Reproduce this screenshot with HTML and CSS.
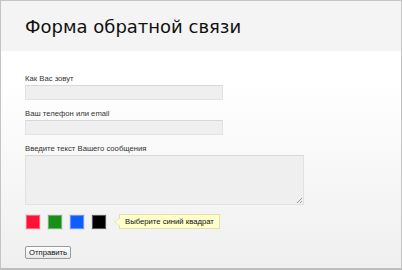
FILE: index.html
```html
<!DOCTYPE html>
<html lang="ru">
<head>
<meta charset="utf-8">
<link rel="stylesheet" href="styles.css">
</head>
<body>
<div class="frame">
  <header class="head">
    <h1 class="title">Форма обратной связи</h1>
  </header>
  <form class="form">
    <div class="field">
      <label class="label">Как Вас зовут</label>
      <div class="input"></div>
    </div>
    <div class="field">
      <label class="label">Ваш телефон или email</label>
      <div class="input"></div>
    </div>
    <div class="field">
      <label class="label">Введите текст Вашего сообщения</label>
      <div class="textarea"><span class="grip"></span></div>
    </div>
    <div class="captcha">
      <span class="sq red"></span>
      <span class="sq green"></span>
      <span class="sq blue"></span>
      <span class="sq black"></span>
      <span class="tip">Выберите синий квадрат</span>
    </div>
    <div class="actions">
      <span class="btn">Отправить</span>
    </div>
  </form>
</div>
</body>
</html>
```
FILE: styles.css
```css
html, body { margin: 0; padding: 0; }
body { width: 402px; height: 270px; overflow: hidden; }
.frame {
  box-sizing: border-box;
  width: 402px;
  height: 270px;
  border: 1px solid #c4c4c4;
  border-bottom: 2px solid #bdbdbd;
  background: linear-gradient(#ffffff 0px, #ffffff 80px, #efefef 100%);
  font-family: "Liberation Sans", Arial, sans-serif;
}
.head {
  height: 50px;
  background: #f4f4f4;
  padding-left: 24px;
  display: flex;
  align-items: center;
}
.title {
  margin: 0;
  font-family: "DejaVu Sans", Verdana, sans-serif;
  font-weight: normal;
  font-size: 18px;
  color: #111;
}
.form {
  padding: 22px 0 0 24px;
}
.field { margin-bottom: 8px; }
.label {
  display: block;
  font-size: 7.7px;
  line-height: 11px;
  color: #333;
  margin-bottom: 1px;
}
.input {
  box-sizing: border-box;
  width: 198px;
  height: 15px;
  background: #efefef;
  border: 1px solid #e2e2e2;
  border-top-color: #d8d8d8;
}
.textarea {
  box-sizing: border-box;
  width: 279px;
  height: 50px;
  background: #efefef;
  border: 1px solid #e2e2e2;
  border-top-color: #d8d8d8;
  position: relative;
}
.grip {
  position: absolute;
  right: 1px;
  bottom: 1px;
  width: 5px;
  height: 5px;
  background: linear-gradient(135deg, transparent 45%, #999 45%, #999 55%, transparent 55%, transparent 75%, #999 75%, #999 85%, transparent 85%);
}
.captcha {
  display: flex;
  align-items: center;
  gap: 8px;
  margin-top: 9px;
  padding-left: 1px;
  height: 15px;
}
.sq {
  box-sizing: border-box;
  width: 14px;
  height: 14px;
  border: 1px solid rgba(255,255,255,0.35);
  outline: 1px solid rgba(0,0,0,0.06);
}
.red { background: #ff1236; }
.green { background: #1a8e1a; }
.blue { background: #0f5cff; }
.black { background: #000; }
.tip {
  position: relative;
  margin-left: 5px;
  height: 15px;
  box-sizing: border-box;
  padding: 0 5px;
  background: #ffffcc;
  border: 1px solid #e6dfa8;
  font-size: 7.7px;
  line-height: 13px;
  color: #111;
}
.tip::before {
  content: "";
  position: absolute;
  left: -6px;
  top: 3px;
  width: 0;
  height: 0;
  border-top: 4px solid transparent;
  border-bottom: 4px solid transparent;
  border-right: 6px solid #e6dfa8;
}
.tip::after {
  content: "";
  position: absolute;
  left: -5px;
  top: 3px;
  width: 0;
  height: 0;
  border-top: 4px solid transparent;
  border-bottom: 4px solid transparent;
  border-right: 6px solid #ffffcc;
}
.actions { margin-top: 12px; }
.btn {
  display: inline-block;
  box-sizing: border-box;
  height: 13px;
  padding: 0 3px;
  font-size: 7.7px;
  line-height: 11px;
  color: #111;
  background: linear-gradient(#ffffff, #e8e8e8);
  border: 1px solid #9a9a9a;
  border-radius: 2px;
}
```
